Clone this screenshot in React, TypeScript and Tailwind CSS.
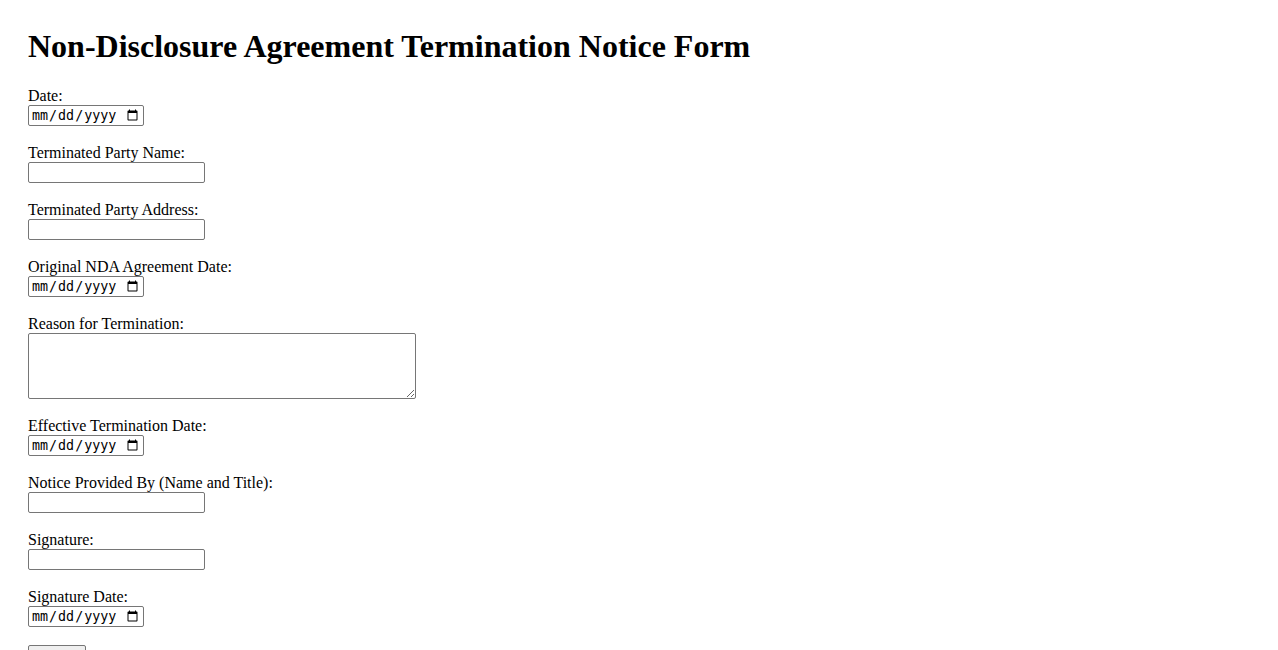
import React from "react";

const serif = "font-['Liberation_Serif','Times_New_Roman',serif]";

function Label({ children }: { children: React.ReactNode }) {
  return <label className="block h-[18px] text-[16px] leading-[18px] text-black">{children}</label>;
}

function TextInput() {
  return (
    <input
      type="text"
      className="block w-[177px] h-[21px] border border-[#767676] rounded-[2px] bg-white px-[2px] py-[1px] text-[13.33px] font-['DejaVu_Sans',sans-serif]"
    />
  );
}

function DateInput() {
  return (
    <input
      type="date"
      className="block w-[116px] h-[21px] border border-[#767676] rounded-[2px] bg-white px-[2px] py-[1px] [font:revert]"
    />
  );
}

export default function App() {
  return (
    <div className={`min-h-screen bg-white text-black pl-[28px] pt-[28px] ${serif}`}>
      <h1 className="text-[32px] leading-[37px] font-bold mb-[22px]">Non-Disclosure Agreement Termination Notice Form</h1>
      <form className="flex flex-col items-start">
        <div className="mb-[18px]">
          <Label>Date:</Label>
          <DateInput />
        </div>
        <div className="mb-[18px]">
          <Label>Terminated Party Name:</Label>
          <TextInput />
        </div>
        <div className="mb-[18px]">
          <Label>Terminated Party Address:</Label>
          <TextInput />
        </div>
        <div className="mb-[18px]">
          <Label>Original NDA Agreement Date:</Label>
          <DateInput />
        </div>
        <div className="mb-[18px]">
          <Label>Reason for Termination:</Label>
          <textarea className="block w-[388px] h-[66px] border border-[#767676] rounded-[2px] bg-white px-[2px] py-[2px] resize-y" />
        </div>
        <div className="mb-[18px]">
          <Label>Effective Termination Date:</Label>
          <DateInput />
        </div>
        <div className="mb-[18px]">
          <Label>Notice Provided By (Name and Title):</Label>
          <TextInput />
        </div>
        <div className="mb-[18px]">
          <Label>Signature:</Label>
          <TextInput />
        </div>
        <div className="mb-[18px]">
          <Label>Signature Date:</Label>
          <DateInput />
        </div>
        <button
          type="submit"
          className="h-[21px] w-[58px] border border-[#767676] rounded-[2px] bg-[#efefef] px-[6px] py-[1px] [font:revert]"
        >
          Submit
        </button>
      </form>
    </div>
  );
}
